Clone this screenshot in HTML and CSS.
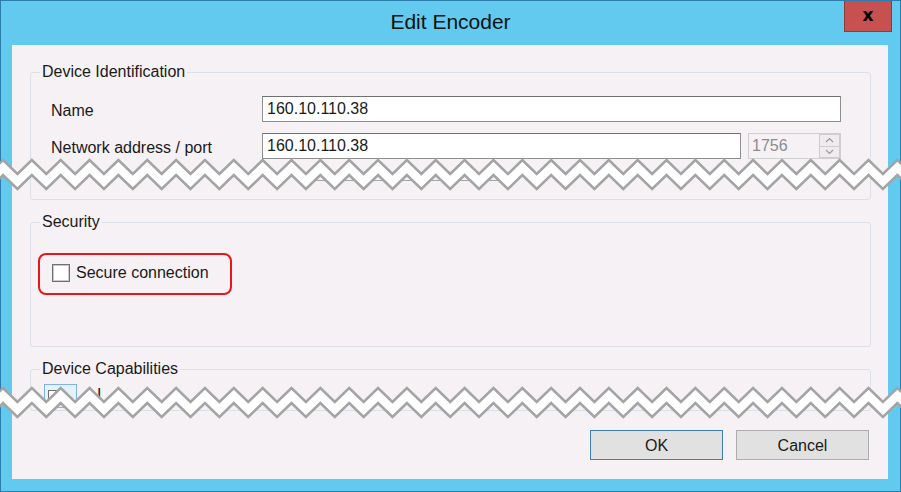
FILE: index.html
```html
<!DOCTYPE html>
<html>
<head>
    <title>Edit Encoder</title>
    <link rel="stylesheet" href="styles.css">
</head>
<body>
    <div class="window">
        <div class="titlebar">
            <span></span>
            <h1 class="title">Edit Encoder</h1>
            <button class="close">x</button>
        </div>

        <div class="panel">
            <fieldset class="group group-ident">
                <legend>Device Identification</legend>
                <div class="row row-first">
                    <label>Name</label>
                    <div class="textbox textbox-wide">160.10.110.38</div>
                </div>
                <div class="row">
                    <label>Network address / port</label>
                    <div class="textbox textbox-address">160.10.110.38</div>
                    <div class="spinner">
                        <span class="spinner-value">1756</span>
                        <span class="spinner-buttons">
                            <span class="spin">
                                <svg width="9" height="6" viewBox="0 0 9 6"><polyline points="1,5 4.5,1.5 8,5" /></svg>
                            </span>
                            <span class="spin">
                                <svg width="9" height="6" viewBox="0 0 9 6"><polyline points="1,1 4.5,4.5 8,1" /></svg>
                            </span>
                        </span>
                    </div>
                </div>
                <div class="row-hidden"></div>
            </fieldset>

            <fieldset class="group group-security">
                <legend>Security</legend>
                <div class="highlight">
                    <span class="checkbox"></span>
                    <span class="check-label">Secure connection</span>
                </div>
            </fieldset>

            <fieldset class="group group-caps">
                <legend>Device Capabilities</legend>
                <div class="caps-row">
                    <span class="focus-box">
                        <span class="checkbox checkbox-small">
                            <svg width="9" height="9" viewBox="0 0 9 9"><polyline points="1.5,4.5 3.5,6.5 7.5,2" /></svg>
                        </span>
                    </span>
                    <span class="caps-label">I</span>
                </div>
            </fieldset>

            <div class="buttons">
                <button class="btn btn-default">OK</button>
                <button class="btn">Cancel</button>
            </div>
        </div>
    </div>

    <svg class="zigzag zigzag-upper" id="zigzag-upper" width="901" height="40" viewBox="0 0 901 40"></svg>
    <svg class="zigzag zigzag-lower" id="zigzag-lower" width="901" height="40" viewBox="0 0 901 40"></svg>

    <script>
        const svgNS = 'http://www.w3.org/2000/svg';

        function drawZigzag(svg, peakY) {
            const period = 28.85;
            const amp = 14;
            const band = 15;
            const top = [];
            const bottom = [];
            let i = 0;
            for (let x = 3 - period; x < 901 + period; x += period / 2) {
                const y = peakY + (i % 2 ? amp : 0);
                top.push(x.toFixed(2) + ',' + y);
                bottom.push(x.toFixed(2) + ',' + (y + band));
                i++;
            }

            const fill = document.createElementNS(svgNS, 'polygon');
            fill.setAttribute('points', top.concat(bottom.slice().reverse()).join(' '));
            fill.setAttribute('class', 'zigzag-fill');
            svg.appendChild(fill);

            [top, bottom].forEach(points => {
                const line = document.createElementNS(svgNS, 'polyline');
                line.setAttribute('points', points.join(' '));
                line.setAttribute('class', 'zigzag-line');
                svg.appendChild(line);
            });
        }

        drawZigzag(document.getElementById('zigzag-upper'), 5);
        drawZigzag(document.getElementById('zigzag-lower'), 5);
    </script>
</body>
</html>
```

FILE: styles.css
```css
body {
    margin: 0;
    position: relative;
    font-family: "Liberation Sans", Arial, sans-serif;
    font-size: 16px;
    color: #1a1a1a;
    background-color: #62c9ef;
}

.window {
    width: 901px;
    height: 492px;
    box-sizing: border-box;
    border: 1px solid #2c7cae;
    background-color: #62c9ef;
    display: flex;
    flex-direction: column;
}

.titlebar {
    height: 44px;
    flex-shrink: 0;
    display: grid;
    grid-template-columns: 1fr auto 1fr;
}

.title {
    margin: 0;
    font-size: 21px;
    font-weight: normal;
    line-height: 42px;
    color: #111;
}

.close {
    justify-self: end;
    align-self: start;
    width: 48px;
    height: 31px;
    margin-right: 8px;
    padding: 0 0 3px 0;
    background-color: #c75050;
    border: 1px solid #8e3b3b;
    border-top: none;
    font-family: "DejaVu Sans", sans-serif;
    font-size: 17px;
    font-weight: bold;
    color: #000;
}

.panel {
    flex: 1;
    margin: 0 12px 12px 11px;
    padding: 18px 17px 0 18px;
    background-color: #f5f1f5;
    box-sizing: border-box;
}

.group {
    margin: 0;
    padding: 0 29px 18px 9px;
    border: 1px solid #dbe0e8;
    border-radius: 3px;
    min-width: 0;
}

.group + .group {
    margin-top: 13px;
}

.group legend {
    padding: 0 2px;
    line-height: 18px;
}

.row {
    display: flex;
    align-items: center;
    height: 26px;
    margin-top: 11px;
    margin-left: 11px;
}

.row-first {
    margin-top: 15px;
}

.row label {
    width: 211px;
    flex-shrink: 0;
    padding-top: 3px;
}

.textbox {
    height: 26px;
    box-sizing: border-box;
    border: 1px solid #8f8f8f;
    border-top-color: #707070;
    background-color: #fff;
    padding-left: 4px;
    line-height: 24px;
}

.textbox-wide {
    flex: 1;
}

.textbox-address {
    width: 479px;
}

.spinner {
    margin-left: 7px;
    width: 93px;
    height: 26px;
    box-sizing: border-box;
    border: 1px solid #cfcfcf;
    display: flex;
    align-items: center;
    padding-left: 3px;
    color: #8c8c8c;
}

.spinner-buttons {
    margin-left: auto;
    width: 21px;
    height: 24px;
    display: flex;
    flex-direction: column;
}

.spin {
    flex: 1;
    display: flex;
    align-items: center;
    justify-content: center;
    border: 1px solid #cdcdcd;
    background-color: #efebef;
}

.spin + .spin {
    border-top: none;
}

.spin svg polyline {
    fill: none;
    stroke: #9a9a9a;
    stroke-width: 1.2;
}

.row-hidden {
    margin-top: 21px;
    margin-left: 270px;
    width: 190px;
    border-top: 1px solid #a5a5a5;
}

.group-security {
    padding-bottom: 51px;
}

.highlight {
    display: flex;
    align-items: center;
    width: fit-content;
    margin-top: 22px;
    margin-left: -2px;
    padding: 8px 21px 11px 12px;
    border: 2px solid #e8161c;
    border-radius: 8px;
}

.checkbox {
    width: 18px;
    height: 18px;
    box-sizing: border-box;
    border: 1px solid #707070;
    box-shadow: inset 0 0 0 1px #c9c9c9;
    background-color: #fff;
}

.check-label {
    margin-left: 6px;
    padding-top: 1px;
}

.group-caps {
    padding-bottom: 2px;
}

.caps-row {
    display: flex;
    align-items: flex-start;
    margin-top: 6px;
    margin-left: 4px;
}

.focus-box {
    width: 33px;
    height: 24px;
    box-sizing: border-box;
    border: 1px solid #7eb4ea;
    background-color: #e5f1fb;
    display: flex;
    align-items: center;
    padding-left: 3px;
}

.checkbox-small {
    width: 13px;
    height: 13px;
    box-shadow: none;
    display: flex;
    align-items: center;
    justify-content: center;
}

.checkbox-small polyline {
    fill: none;
    stroke: #333;
    stroke-width: 1.5;
}

.caps-label {
    margin-left: 20px;
    line-height: 18px;
    margin-top: 2px;
}

.buttons {
    display: flex;
    justify-content: flex-end;
    gap: 13px;
    margin-top: 19px;
    margin-right: 2px;
}

.btn {
    width: 133px;
    height: 30px;
    padding-top: 3px;
    font-family: "Liberation Sans", Arial, sans-serif;
    font-size: 16px;
    color: #1a1a1a;
    background-color: #e1e1e1;
    border: 1px solid #adadad;
}

.btn-default {
    border-color: #3d7fb4;
}

.zigzag {
    position: absolute;
    left: 0;
}

.zigzag-upper {
    top: 155px;
}

.zigzag-lower {
    top: 383px;
}

.zigzag-fill {
    fill: #fff;
}

.zigzag-line {
    fill: none;
    stroke: #a4a4a4;
    stroke-width: 2.5;
}
```
